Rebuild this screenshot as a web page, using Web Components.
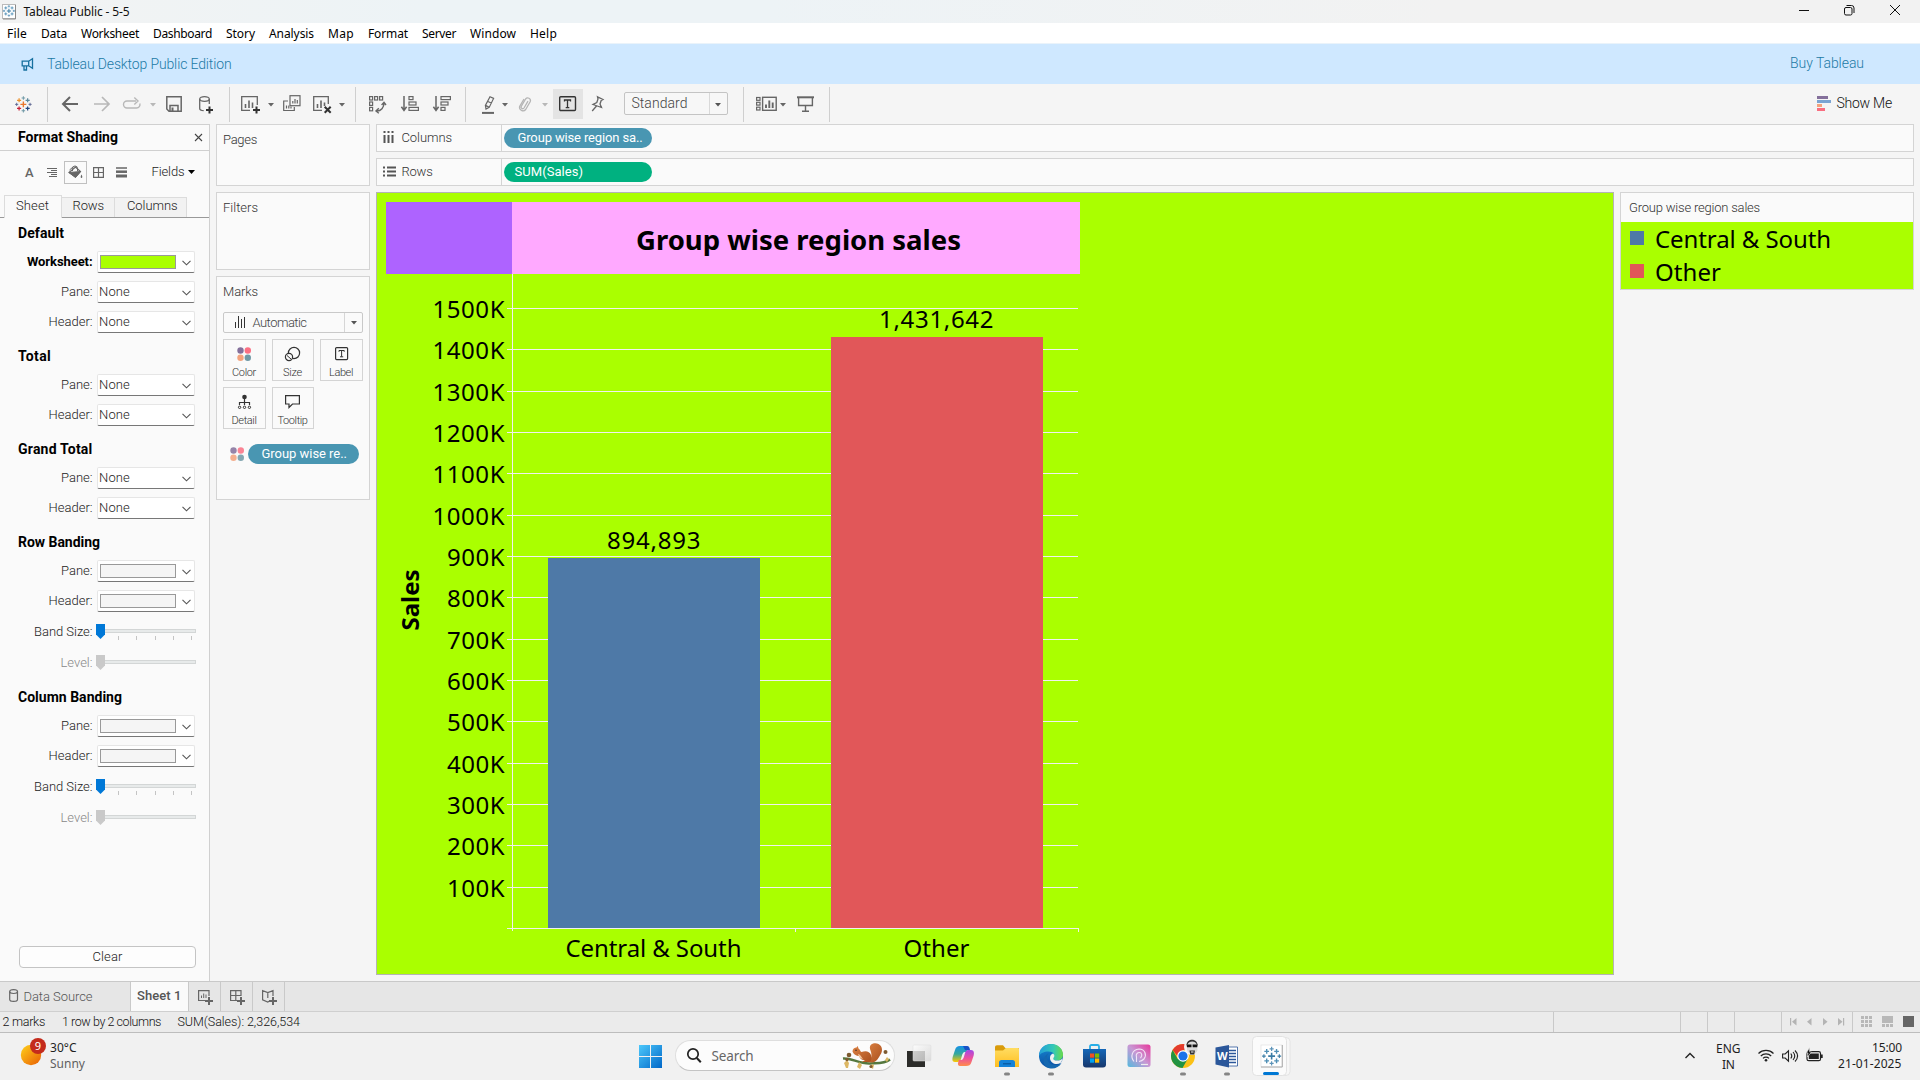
<!DOCTYPE html>
<html lang="en">
<head>
<meta charset="utf-8">
<title>Tableau Public - 5-5</title>
<style>
html,body{margin:0;padding:0;width:1920px;height:1080px;overflow:hidden;background:#f5f5f5}
body{font-family:Roboto,"Noto Sans",sans-serif;font-size:12.5px;color:#222;font-weight:300}
</style>
</head>
<body>
<workbook-app></workbook-app>
<script>
const BASE = `*{box-sizing:border-box} svg{display:block;flex:none;overflow:visible} .r{display:flex;align-items:flex-start} .i{flex:none}`;

function define(name, css, html, hook) {
  customElements.define(name, class extends HTMLElement {
    constructor() {
      super();
      this.attachShadow({ mode: 'open' });
    }
    connectedCallback() {
      if (this.ready) return;
      this.ready = true;
      const body = typeof html === 'function' ? html(this) : html;
      this.shadowRoot.innerHTML = `<style>${BASE}${css}</style>${body}`;
      if (hook) hook(this);
    }
  });
}

/* A single-line label tracked to an exact width. */
define('fit-text', ':host{display:block;white-space:pre;line-height:20px;height:20px} span{display:inline-block}', '<span><slot></slot></span>', el => {
  const s = el.shadowRoot.querySelector('span');
  const n = el.textContent.length;
  const w = parseFloat(el.getAttribute('w'));
  if (w) s.style.letterSpacing = ((w - s.getBoundingClientRect().width) / n) + 'px';
});

const T = (x, cy, x2, text, style = '') =>
  ({ x: x - 1, y: cy - 10, w: x2 - x + 2, h: 20, c: `<fit-text w="${x2 - x + 2}" style="${style}">${text}</fit-text>` });
const S = (x, y, w, h, inner, attrs = '') =>
  ({ x, y, w, h, c: `<svg width="${w}" height="${h}" viewBox="0 0 ${w} ${h}" fill="none" stroke="#666" ${attrs}>${inner}</svg>` });
const B = (x, y, w, h, style, inner = '') => ({ x, y, w, h, c: inner, s: style });
function row(items, ox = 0, oy = 0) {
  let cur = ox;
  return '<div class="r">' + items.map(i => {
    const m = i.x - cur;
    cur = i.x + i.w;
    return `<div class="i" style="margin-left:${m}px;margin-top:${i.y - oy}px;width:${i.w}px;height:${i.h}px;${i.s || ''}">${i.c}</div>`;
  }).join('') + '</div>';
}
const caret = (x, y, c = '#666') => S(x - 3, y - 1.5, 6, 4, `<path d="M0 0h6L3 3.6z" fill="${c}" stroke="none"/>`);

function sparkle(k, cols) {
  const plus = (x, y, r, c, w) => `<path d="M${x - r} ${y}h${2 * r}M${x} ${y - r}v${2 * r}" stroke="${c}" stroke-width="${w}"/>`;
  return `<g transform="scale(${k})">` +
    plus(9, 9, 3.2, cols[0], 1.5) + plus(9, 2.2, 1.9, cols[1], 1.1) + plus(9, 15.8, 1.9, cols[2], 1.1) +
    plus(1.8, 9, 1.7, cols[3], 1) + plus(16.2, 9, 1.7, cols[4], 1) +
    plus(4.4, 4.6, 2.2, cols[5], 1.3) + plus(13.6, 4.6, 2.2, cols[6], 1.3) +
    plus(4.4, 13.4, 2.2, cols[7], 1.3) + plus(13.6, 13.4, 2.2, cols[8], 1.3) + '</g>';
}
const BLUES = ['#3a7ca5', '#5b93b8', '#5b93b8', '#3a7ca5', '#3a7ca5', '#4e8fb5', '#4e8fb5', '#4e8fb5', '#4e8fb5'];
const BRAND = ['#e8762c', '#7099a6', '#7099a6', '#5b6591', '#5b6591', '#eb912c', '#59879b', '#c72037', '#1f447e'];

/* ---------- window chrome ---------- */
const seg = 'font-family:Noto Sans,sans-serif;font-weight:400;';
define('title-bar', ':host{display:block;height:23px;background:linear-gradient(90deg,#f2f3f3 0,#edf3f6 22%,#edf3f6 40%,#f2f2f2 75%)}',
  row([
    S(2, 4, 15, 15, `<rect x=".5" y=".5" width="13" height="14" fill="#fff" stroke="#bbb"/><path d="M13.5 1v14H1" stroke="#888"/><g transform="translate(.8,.8)">${sparkle(.68, BLUES)}</g>`),
    T(24.5, 11.5, 128.5, 'Tableau Public - 5-5', seg + 'font-size:12px;color:#111'),
    S(1799, 5, 10, 10, '<path d="M0 5.5h10" stroke="#111"/>'),
    S(1844, 5, 11, 11, '<rect x=".5" y="2.5" width="7.5" height="7.5" rx="1.5" stroke="#111"/><path d="M2.5.5h5a2.5 2.5 0 0 1 2.5 2.5v5" stroke="#111"/>'),
    S(1890, 5, 10, 10, '<path d="M0 0l10 10M10 0L0 10" stroke="#111"/>')
  ]));
const MENU = [['File', 8, 26], ['Data', 42, 66], ['Worksheet', 82, 138], ['Dashboard', 154, 211], ['Story', 227, 254], ['Analysis', 270, 313], ['Map', 329, 353], ['Format', 369, 407], ['Server', 423, 455], ['Window', 471, 515], ['Help', 531, 556]];
define('menu-bar', ':host{display:block;height:21px;background:#fff;border-bottom:1px solid #eaf3fa}',
  row(MENU.map(m => T(m[1], 33.5, m[2], m[0], seg + 'font-size:12px;color:#000')), 0, 23));
define('edition-banner', ':host{display:block;height:40px;background:#cfe8ff}',
  row([
    S(21, 58, 13, 13, '<path d="M1.2 3.2h6.5L11.5.8v9.4L7.7 7.8H1.2zM7.7 3.2v4.6M3 8v4h2.5V8" stroke="#17709f" stroke-width="1.3"/>'),
    T(48, 64, 230.5, 'Tableau Desktop Public Edition', 'font-size:14px;color:#217aa6'),
    T(1791, 63, 1863, 'Buy Tableau', 'font-size:14px;color:#217aa6')
  ], 0, 44));

/* ---------- toolbar ---------- */
const sep = x => B(x, 87, 1, 35, 'background:#cfcfcf');
const plusMark = (x, y) => `<path d="M${x - 3.5} ${y}h7M${x} ${y - 3.5}v7" stroke="#333" stroke-width="2"/>`;
define('tool-bar', ':host{display:block;height:40px;background:#f5f5f5} .sel{display:flex;height:23px;border:1px solid #c4c4c4;border-radius:2px;background:#f7f7f7}',
  row([
    S(15, 95.5, 17, 17, sparkle(.93, BRAND)),
    sep(47),
    S(62, 96, 16, 16, '<path d="M1 8h15M8 1L1 8l7 7" stroke-width="2"/>'),
    S(94, 96, 16, 16, '<path d="M0 8h15M8 1l7 7-7 7" stroke="#b8b8b8" stroke-width="1.7"/>'),
    S(123, 96, 18, 16, '<path d="M13 5H4a3.4 3.4 0 0 0 0 7h9.5a3.4 3.4 0 0 0 3.3-4.5M11.3 1.4L15 5l-3.7 3.6" stroke="#b8b8b8" stroke-width="1.4"/>'),
    caret(152.6, 104.5, '#b8b8b8'),
    S(166, 96, 16, 16, '<path d="M.8.8h14.4v14.4H3L.8 13zM4 15V9.5h8V15" stroke-width="1.5"/><path d="M5.5 11.5h2V15h-2z" fill="#666" stroke="none"/>'),
    S(199, 96, 15, 18, '<ellipse cx="5.5" cy="3" rx="4.8" ry="2.3" stroke-width="1.3"/><path d="M.7 3v9.5c0 1.2 2 2.1 4 2.2M10.3 3v5" stroke-width="1.3"/>' + plusMark(10.5, 14)),
    sep(229),
    S(241, 96, 20, 18, '<path d="M9 14.4H.7V.7h15.6V9" stroke-width="1.3"/><path d="M4.5 12V8M8 12V4.5M11.5 12V6.5" stroke-width="1.6"/>' + plusMark(15.5, 14)),
    caret(270.6, 104.5),
    S(283, 95, 18, 17, '<path d="M5 6H.7v9.5h10.6V12" stroke-width="1.2"/><rect x="7" y=".7" width="10" height="10" stroke-width="1.2"/><path d="M9.8 8.5V6M12 8.5V4M14.3 8.5V5M3.5 13.5v-3M5.8 13.5v-3M8 13.5v-2" stroke-width="1.2"/>'),
    S(313, 96, 19, 18, '<path d="M9 14.4H.7V.7h14.6V8" stroke-width="1.3"/><path d="M4.5 12V8M8 12V4.5M11.5 10V6.5" stroke-width="1.6"/><path d="M11.7 10.7l6 6M17.7 10.7l-6 6" stroke="#333" stroke-width="2"/>'),
    caret(342, 104.5),
    sep(355),
    S(369, 96, 17, 17, '<g stroke-width="1.2"><rect x=".6" y=".6" width="3" height="3.4"/><rect x="5.6" y=".6" width="3" height="3.4"/><rect x="10.6" y=".6" width="3" height="3.4"/><rect x=".6" y="6" width="3" height="3.4"/><rect x=".6" y="11.4" width="3" height="3.4"/><path d="M8 15c4 0 7-3.5 7-8M12.6 9L15 6.4 17 9M9.8 12.3L7 15l2.8 2.2" stroke-width="1.4"/></g>'),
    S(401, 96, 18, 16, '<path d="M3 0v14M.4 10.8L3 14.4l2.6-3.6" stroke-width="1.5"/><g stroke-width="1.2"><rect x="8" y=".6" width="4" height="3"/><rect x="8" y="6" width="7" height="3"/><rect x="8" y="11.4" width="9.4" height="3"/></g>'),
    S(433, 96, 18, 16, '<path d="M3 0v14M.4 10.8L3 14.4l2.6-3.6" stroke-width="1.5"/><g stroke-width="1.2"><rect x="8" y=".6" width="9.4" height="3"/><rect x="8" y="6" width="7" height="3"/><rect x="8" y="11.4" width="4" height="3"/></g>'),
    sep(465),
    S(482, 96, 13, 18, '<path d="M8 .8l3.6 1.6-4.4 9L4 13l-.6-3.6zM3.6 9.4l3.6 1.8M6 5.5l3.6 1.7" stroke-width="1.2"/><path d="M0 16.9h12" stroke-width="2"/>'),
    caret(505.5, 104.5),
    S(518, 96, 14, 16, '<path d="M10 5.2L6 12a1.6 1.6 0 0 1-2.8-1.5L7.6 3a2.7 2.7 0 0 1 4.7 2.5L7.7 13.5A3.5 3.5 0 0 1 1.6 10.5L6 3" stroke="#b5b5b5" stroke-width="1.3"/>'),
    caret(545.5, 104.5, '#b8b8b8'),
    B(553, 89, 30, 30, 'background:#e4e4e4;padding:7px 6px', '<svg width="18" height="16" fill="none" stroke="#333"><rect x=".7" y=".7" width="15.8" height="13.8" rx="1" stroke-width="1.4"/><path d="M5.5 5.5V4h6v1.5M8.5 4v7.6M6.7 11.6h3.6" stroke-width="1.3"/></svg>'),
    S(591, 96, 13, 16, '<path d="M6.5.8l5.5 2.7-1.8 1L9 8l1.5 3.5L2 8.5 5.8 6.500 7 3zM5.5 10L1.200 15" stroke-width="1.3"/>'),
    B(624, 92, 104, 23, '', `<div class="sel">${row([T(632.5, 103, 686.5, 'Standard', 'font-size:14px;color:#444'), B(709, 93, 1, 21, 'background:#d9d9d9'), caret(718.5, 104, '#555')], 625, 93)}</div>`),
    sep(743),
    S(756, 96, 21, 16, '<g stroke-width="1.2"><rect x=".6" y="1.5" width="3.4" height="2.8"/><rect x=".6" y="6.3" width="3.4" height="2.8"/><rect x=".6" y="11.2" width="3.4" height="2.8"/><rect x="6.6" y="1.3" width="13.6" height="13" stroke-width="1.4"/></g><path d="M10 12V8.5M13.3 12V4.5M16.7 12V6.5" stroke-width="1.9"/>'),
    caret(783.5, 104.5),
    S(797, 96, 17, 16, '<path d="M0 1.3h17" stroke-width="2"/><path d="M1.6 2v7.5h13.8V2M8.5 9.5v5.5M5 15.2h7" stroke-width="1.4"/>'),
    sep(829),
    S(1817, 96, 14, 15, '<g stroke="none"><path d="M0 0h11v3H0z" fill="#84709b"/><path d="M0 4h14v3H0z" fill="#7ba4d2"/><path d="M0 8h5v3H0z" fill="#f4a37d"/><path d="M0 12h8v3H0z" fill="#f96e80"/></g>'),
    T(1837.5, 103, 1891, 'Show Me', 'font-size:14px;color:#111')
  ], 0, 84));

/* ---------- format pane ---------- */
define('drop-down', `:host{display:flex;width:98px;height:22px;background:#fff;border:1px solid #e6e6e6;border-bottom:1px solid #777;border-radius:2px;align-items:center;justify-content:space-between;padding:0 2px;color:#222;font-size:13px}
 .sw{width:76px;height:14px;border:1px solid #999} fit-text{margin-left:-1px}`,
  el => {
    const c = el.getAttribute('swatch');
    return (c ? `<div class="sw" style="background:${c}"></div>` : '<fit-text w="31">None</fit-text>') +
      '<svg width="9" height="6" fill="none" stroke="#555" style="margin:1px 1px 0 0"><path d="M.5 .8l4 4 4-4" stroke-width="1.1"/></svg>';
  });
define('range-slider', ':host{display:block;width:100px;height:16px;margin-top:1px}',
  el => {
    const off = el.hasAttribute('disabled');
    const ticks = off ? '' : [22, 40, 59, 77, 95].map(x => `<path d="M${x + .5} 12v4" stroke="#c4c4c4"/>`).join('');
    return `<svg width="100" height="16" fill="none"><rect x="1.5" y="5.5" width="98" height="3" fill="#e7eaea" stroke="#d3d6d6"/><path d="M0 0h9v10.5L4.5 15 0 10.5z" fill="${off ? '#c9c9c9' : '#0078d7'}"/>${ticks}</svg>`;
  });
define('format-row', `:host{display:flex;height:30px;align-items:center;color:#222} :host([slider]){height:31px} :host([muted]){color:#888}
 .l{width:92.5px;display:flex;justify-content:flex-end;margin-right:3.5px} .l fit-text{font-size:13px} :host([strong]) .l{color:#000;font-weight:700}`,
  el => `<div class="l"><fit-text w="${el.getAttribute('w')}">${el.getAttribute('label')}</fit-text></div><slot></slot>`);
define('format-section', ':host{display:block} .h{height:33px;padding:9px 0 0 18px;color:#000;font-weight:700;font-size:14px}',
  el => `<div class="h"><fit-text w="${el.getAttribute('w')}">${el.getAttribute('label')}</fit-text></div><slot></slot>`);
const frow = (label, w, sw) => `<format-row label="${label}" w="${w}"${label === 'Worksheet:' ? ' strong' : ''}><drop-down${sw ? ` swatch="${sw}"` : ''} style="margin-left:1px"></drop-down></format-row>`;
const pane = sw => frow('Pane:', 31.5, sw) + frow('Header:', 44, sw);
const sliders = '<format-row slider label="Band Size:" w="58.5"><range-slider></range-slider></format-row><format-row slider muted label="Level:" w="32"><range-slider disabled></range-slider></format-row>';
define('format-pane', `:host{display:flex;flex-direction:column;width:210px;height:857px;background:#fafafa;border-top:1px solid #d0d0d0;border-right:1px solid #d0d0d0}
 .hd{height:26px;border-bottom:1px solid #d0d0d0;flex:none} .ic{height:44px;flex:none} .tabs{display:flex;height:23px;align-items:flex-end;border-bottom:1px solid #999;padding-left:4px;flex:none}
 .tabs div.tab{height:20px;background:#f2f2f2;border:1px solid #dcdcdc;border-left:0;border-bottom:0}
 .tabs div.on{height:23px;width:58px;background:#fafafa;border-left:1px solid #dcdcdc;margin-bottom:-1px}
 .body{flex:1;margin-top:-4px} .clear{margin:0 0 13px 19px;width:177px;height:22px;border:1px solid #c4c4c4;border-radius:4px;background:#fdfdfd;display:flex;justify-content:center;color:#222}
 .swatchbtn{width:23px;height:23px;border:1px solid #c0c0c0;padding:3px}`,
  `<div class="hd">${row([T(19, 137, 117, 'Format Shading', 'font-weight:700;font-size:14px;color:#000'), S(195, 133.5, 7, 7, '<path d="M0 0l7 7M7 0L0 7" stroke="#444" stroke-width="1.1"/>')], 0, 125)}</div>
   <div class="ic">${row([
    T(26, 172.5, 33, 'A', 'font-size:13px;color:#666;font-weight:500'),
    S(47, 168, 10, 9, '<path d="M0 .5h10M4 2.5h6M0 4.5h10M4 6.5h6M2 8.5h8" stroke-width="1"/>'),
    B(64, 161, 23, 23, '', '<div class="swatchbtn"><svg width="15" height="15" fill="none" stroke="#666"><path d="M1 7.5L7.5 2 12.5 6.5 7.5 12z" stroke-width="1.2"/><path d="M1 7.500l11.5-1L7.5 12.5z" fill="#666"/><path d="M4.5 6V3.5a2.5 2.5 0 0 1 5 0V6M1.5 5L5 2" stroke-width="1"/><path d="M13.500 9.5c1 1.6 1.2 3.5 0 3.5s-1-1.9 0-3.5z" fill="#666" stroke="none"/></svg></div>'),
    S(93, 167, 11, 11, '<path d="M.6.6h9.8v9.8H.6zM5.5.6v9.8M.6 5.5h9.8" stroke-width="1.2"/>'),
    S(116, 167, 11, 10, '<path d="M0 1h11" stroke-width="1.5"/><path d="M0 4.7h11" stroke-width="2.5"/><path d="M0 9h11" stroke-width="3"/>'),
    T(152.5, 172, 183.5, 'Fields', 'font-size:13px;color:#222'),
    S(188, 170, 7, 5, '<path d="M0 0h7L3.5 4z" fill="#000" stroke="none"/>')
  ], 0, 151)}</div>
   <div class="tabs"><div class="tab on">${row([T(17, 206, 48, 'Sheet', 'font-size:13px')], 5, 196)}</div><div class="tab" style="width:53px">${row([T(73.5, 207, 103, 'Rows', 'font-size:13px')], 62, 199)}</div><div class="tab" style="width:72px">${row([T(128, 207, 176.5, 'Columns', 'font-size:13px')], 115, 199)}</div></div>
   <div class="body">
    <format-section label="Default" w="46">${frow('Worksheet:', 65.5, '#aaff00')}${pane()}</format-section>
    <format-section label="Total" w="33">${pane()}</format-section>
    <format-section label="Grand Total" w="74.5">${pane()}</format-section>
    <format-section label="Row Banding" w="82">${pane('#f5f5f5')}${sliders}</format-section>
    <format-section label="Column Banding" w="104">${pane('#f5f5f5')}${sliders}</format-section>
   </div>
   <div class="clear"><fit-text w="30" style="font-size:13px">Clear</fit-text></div>`);

/* ---------- cards ---------- */
const dots = '<g stroke="none"><circle cx="3.5" cy="3.5" r="3.2" fill="#84709b"/><circle cx="10.8" cy="3.5" r="3.2" fill="#fb7083"/><circle cx="3.5" cy="10.8" r="3.2" fill="#f4a37d"/><circle cx="10.8" cy="10.8" r="3.2" fill="#7099a6"/></g>';
define('side-card', ':host{display:block;width:154px;background:#fafafa;border:1px solid #d4d4d4;flex:none}',
  el => row([T(224, 16, +el.getAttribute('end'), el.getAttribute('label'), 'font-size:13px;color:#333')], 217, 1) + '<slot></slot>');
define('mark-button', ':host{display:flex;flex-direction:column;align-items:center;width:43px;height:42px;border:1px solid #d4d4d4;background:#fafafa;padding-top:7px;padding-right:1px;color:#333;font-size:11px} .ic{height:17px} fit-text{height:16px;line-height:16px;margin-top:2px}',
  el => `<div class="ic"><slot></slot></div><fit-text w="${el.getAttribute('w')}">${el.getAttribute('label')}</fit-text>`);
const mi = (w, p) => `<svg width="${w}" height="16" style="overflow:visible;display:block" fill="none" stroke="#333">${p}</svg>`;
define('marks-body', ':host{display:block} .dd{margin:10px 0 0 6px;width:140px;height:21px;border:1px solid #c9c9c9;border-radius:2px} .g{display:grid;grid-template-columns:43px 42px 43px;gap:6px;margin:6px 0 0 6px} .g mark-button{width:auto} .p{margin-top:15px}',
  `<div class="dd">${row([
    S(235, 316, 11, 12, '<path d="M.5 12V6M3.5 12V0M6.5 12V3M9.5 12V1" stroke="#333"/>'),
    T(253.5, 323, 305.5, 'Automatic', 'font-size:13px;color:#444'),
    B(344, 313, 1, 19, 'background:#d6d6d6'), caret(353.5, 322.5, '#555')], 224, 313)}</div>
   <div class="g">
    <mark-button label="Color" w="24">${mi(14, dots)}</mark-button>
    <mark-button label="Size" w="19">${mi(15, '<circle cx="9" cy="6" r="5.6" stroke-width="1.2"/><circle cx="4" cy="10" r="3.6" fill="#fafafa" stroke-width="1.2"/><path d="M2 8.5l4 3.5" />')}</mark-button>
    <mark-button label="Label" w="24">${mi(13, '<rect x=".6" y=".6" width="12" height="12" rx="1" stroke-width="1.2"/><path d="M4 4.8V3.5h5.2v1.3M6.6 3.5v6.2M5 9.8h3.2"/>')}</mark-button>
    <mark-button label="Detail" w="25">${mi(13, '<circle cx="6.5" cy="2" r="2.3" fill="#333" stroke="none"/><path d="M6.5 4v6M1.5 10V7.5h10V10" stroke-width="1.2"/><circle cx="1.6" cy="12.3" r="1.2"/><circle cx="6.5" cy="12.3" r="1.2"/><circle cx="11.4" cy="12.3" r="1.2"/>')}</mark-button>
    <mark-button label="Tooltip" w="30">${mi(15, '<path d="M.6.6h13.8v8.4H7.5L4 12.5V9H.6z" stroke-width="1.2"/>')}</mark-button>
   </div>
   <div class="p">${row([S(230, 447, 14, 14, dots, 'opacity=".85"'), B(248, 444, 111, 20, 'background:#4996b2;border-radius:10px', row([T(262.5, 454, 346, 'Group wise re..', 'font-size:13px;color:#fff;font-weight:400')], 248, 444))], 217, 444)}</div>`);

/* ---------- shelves ---------- */
define('shelf-row', ':host{display:flex;width:1538px;height:28px;background:#fafafa;border:1px solid #d4d4d4}',
  el => {
    const col = el.hasAttribute('columns');
    const icon = col ? S(383, 131, 12, 13, '<path d="M1.5 0v2M1.5 4v8M5.5 0v2M5.5 4v8M9.5 0v2M9.5 4v8" stroke="#555" stroke-width="2"/>')
      : S(383, 132, 13, 11, '<path d="M0 1.5h2M4 1.5h9M0 5.5h2M4 5.5h9M0 9.5h2M4 9.5h9" stroke="#555" stroke-width="2"/>');
    return row([icon, T(402.5, 138, col ? 451 : 431.5, col ? 'Columns' : 'Rows', 'font-size:13px;color:#333'),
      B(501, 125, 1, 26, 'background:#d4d4d4'),
      B(504, 128, 148, 20, `border-radius:10px;background:${col ? '#4996b2' : '#00b180'}`,
        row([col ? T(518.5, 138, 641.5, 'Group wise region sa..', 'font-size:13px;color:#fff;font-weight:400') : T(515.5, 138, 582, 'SUM(Sales)', 'font-size:13px;color:#fff;font-weight:400')], 504, 128))], 377, 125);
  });

/* ---------- chart ---------- */
define('bar-chart', ':host{display:block;width:1238px;height:783px;border:1px solid #b4b4b4;background:#aaff00} text{font-family:"Noto Sans",sans-serif;font-size:24px;font-weight:400;fill:#000;stroke:none}',
  () => {
    let g = '';
    for (let i = 1; i <= 15; i++) {
      const y = Math.floor(928.2 - i * 41.333 + .15);
      const s = i + '00K', w = i > 9 ? 72 : 57.5;
      g += `<path d="M507 ${y + .5}H1078" stroke="#f0f0f0"/><text x="${504.5 - w}" y="${y + 10}" textLength="${w}">${s}</text>`;
    }
    const t = (x, x2, y, s, a = '') => `<text x="${x - 1}" y="${y}" textLength="${x2 - x + 2}" ${a}>${s}</text>`;
    return `<svg width="1236" height="781" viewBox="377 193 1236 781" fill="none">
     <path d="M386 202h126v72H386z" fill="#ae63ff"/><path d="M512 202h568v72H512z" fill="#ffa9ff"/>
     ${g}
     <path d="M512.5 274v657M507 928.5H1079M795.5 928v4M1078.5 928v4" stroke="#f0f0f0"/>
     <path d="M548 558h212v370H548z" fill="#4e79a7"/><path d="M831 337h212v591H831z" fill="#e15759"/>
     ${t(637, 960, 249.5, 'Group wise region sales', 'style="font-size:27.5px;font-weight:700"')}
     ${t(608, 699.5, 549, '894,893')}${t(880, 992.5, 328, '1,431,642')}
     ${t(566.5, 740.5, 957, 'Central &amp; South')}${t(904.5, 968.5, 957, 'Other')}
     <text transform="translate(419,630.5) rotate(-90)" textLength="61" style="font-weight:700">Sales</text></svg>`;
  });
define('color-legend', ':host{display:block;width:294px;height:98px;border:1px solid #d4d4d4;background:#fafafa} .b{background:#aaff00;height:67px} .h{height:29px}',
  () => {
    const f = 'font-family:Noto Sans,sans-serif;font-weight:400;font-size:24px;color:#000;';
    return `<div class="h">${row([T(1630, 208, 1759, 'Group wise region sales', 'font-size:13px;color:#333')], 1621, 193)}</div>
    <div class="b">${row([B(1630, 231, 14, 14, 'background:#4e79a7'), T(1656, 239, 1830, 'Central &amp; South', f)], 1621, 222)}
    ${row([B(1630, 22, 14, 14, 'background:#e15759'), T(1656, 30, 1720, 'Other', f)], 1621, 7)}</div>`;
  });

/* ---------- bottom bars ---------- */
define('sheet-tabs', ':host{display:block;height:30px;background:#e6e6e6;border-top:1px solid #c9c9c9}',
  row([
    S(9, 989, 10, 13, '<ellipse cx="4.6" cy="2.6" rx="3.9" ry="1.9"/><path d="M.7 2.6v7.8c0 1.1 1.7 1.9 3.9 1.9s3.9-.8 3.9-1.9V2.6"/>', 'stroke-width="1.2"'),
    T(24.5, 996.5, 91.5, 'Data Source', 'font-size:13px;color:#555'),
    B(130, 982, 59, 29, 'background:#fafafa;border-left:1px solid #c9c9c9;border-right:1px solid #c9c9c9', row([T(138, 996, 180.5, 'Sheet 1', 'font-size:13px;font-weight:500;color:#555')], 131, 982)),
    S(198, 990, 15, 15, '<path d="M8 10.5H.6V.6H11V6" stroke-width="1.2"/><path d="M3.5 8V5.5M5.7 8V3.5M8 8V4.5"/><path d="M7 11h8M11 7v8" stroke-width="2"/>'),
    B(220, 982, 1, 29, 'background:#c9c9c9'),
    S(230, 990, 15, 15, '<path d="M8 10.5H.6V.6H11V6M5.8.6v10M.6 5.5H11" stroke-width="1.2"/><path d="M7 11h8M11 7v8" stroke-width="2"/>'),
    B(252, 982, 1, 29, 'background:#c9c9c9'),
    S(262, 990, 15, 15, '<path d="M8 10.8L5.8 12 .6 9.8V.6L5.8 2.5 11 .6V6M5.8 2.5V8" stroke-width="1.2"/><path d="M7 11h8M11 7v8" stroke-width="2"/>'),
    B(284, 982, 1, 29, 'background:#c9c9c9')
  ], 0, 982));
const vs = x => B(x, 1012, 1, 20, 'background:#c9c9c9');
define('status-bar', ':host{display:block;height:22px;background:#ebebeb;border-top:1px solid #cfcfcf;border-bottom:1px solid #bdbdbd;font-size:12.5px;color:#111}',
  row([
    T(3.5, 1022, 44, '2 marks'), T(63, 1022, 160, '1 row by 2 columns'), T(178.5, 1022, 299, 'SUM(Sales): 2,326,534'),
    vs(1553), vs(1680), vs(1707), vs(1734), vs(1781),
    S(1790, 1018, 7, 8, '<path d="M.6 0v7.5" stroke="#b4b4b4" stroke-width="1.2"/><path d="M6.5 0v7.5L2 3.8z" fill="#b4b4b4" stroke="none"/>'),
    S(1807, 1018, 5, 8, '<path d="M4.5 0v7.5L0 3.8z" fill="#b4b4b4" stroke="none"/>'),
    S(1823, 1018, 5, 8, '<path d="M0 0v7.5L4.5 3.8z" fill="#b4b4b4" stroke="none"/>'),
    S(1838, 1018, 7, 8, '<path d="M5.6 0v7.5" stroke="#b4b4b4" stroke-width="1.2"/><path d="M0 0v7.5L4.5 3.8z" fill="#b4b4b4" stroke="none"/>'),
    vs(1852),
    S(1861, 1016, 11, 11, '<path d="M0 1.5h11M0 5.5h11M0 9.5h11" stroke="#b8b8b8" stroke-width="3" stroke-dasharray="3 1"/>'),
    S(1882, 1016, 11, 11, '<path d="M0 3.5h11" stroke="#b8b8b8" stroke-width="7"/><path d="M0 9.5h11" stroke="#b8b8b8" stroke-width="3" stroke-dasharray="3 1"/>'),
    B(1903, 1016, 11, 11, 'background:#666')
  ], 0, 1012));

define('task-bar', ':host{display:block;height:47px;background:#f1f1f1} .pill{height:31px;border-radius:16px;background:#fcfcfc;border:1px solid #dedede;border-bottom-color:#c4c4c4}',
  () => {
    const f = seg + 'font-size:12px;color:#1f1f1f';
    const dot = '<rect x="9" y="28.5" width="6" height="3" rx="1.5" fill="#858585"/>';
    const A = (x, p) => S(x, 1044, 24, 34, p, 'stroke-width="0"');
    return `<svg width="0" height="0" style="position:absolute"><defs>
      <linearGradient id="sun" x1="0" y1="0" x2="1" y2="1"><stop offset="0" stop-color="#ffd21c"/><stop offset="1" stop-color="#e85d04"/></linearGradient>
      <linearGradient id="win" x1="0" y1="0" x2="1" y2="1"><stop offset="0" stop-color="#4cc8fb"/><stop offset="1" stop-color="#0067c8"/></linearGradient>
      <linearGradient id="cpa" x1="0" y1="0" x2="0" y2="1"><stop offset="0" stop-color="#1590e8"/><stop offset=".5" stop-color="#35a99b"/><stop offset="1" stop-color="#ffc700"/></linearGradient>
      <linearGradient id="cpb" x1="0" y1="0" x2="0" y2="1"><stop offset="0" stop-color="#a348e8"/><stop offset=".5" stop-color="#ec4fa0"/><stop offset="1" stop-color="#ff8c4a"/></linearGradient>
      <linearGradient id="fol" x1="0" y1="0" x2="0" y2="1"><stop offset="0" stop-color="#ffdd62"/><stop offset="1" stop-color="#ffbe20"/></linearGradient>
      <linearGradient id="ed1" x1="0" y1="0" x2="1" y2="0"><stop offset="0" stop-color="#239edb"/><stop offset=".6" stop-color="#35c9b5"/><stop offset="1" stop-color="#6bdb48"/></linearGradient>
      <linearGradient id="ed2" x1="0" y1="0" x2="0" y2="1"><stop offset="0" stop-color="#168bd5"/><stop offset="1" stop-color="#0b4ea2"/></linearGradient>
      <linearGradient id="sto" x1="0" y1="0" x2="0" y2="1"><stop offset="0" stop-color="#1467b8"/><stop offset="1" stop-color="#17376c"/></linearGradient>
      <linearGradient id="pk" x1="1" y1="0" x2="0" y2="1"><stop offset="0" stop-color="#e7389c"/><stop offset=".5" stop-color="#c898d4"/><stop offset="1" stop-color="#54b9dd"/></linearGradient>
      <linearGradient id="tv" x1="0" y1="0" x2="1" y2="1"><stop offset="0" stop-color="#fff"/><stop offset="1" stop-color="#d4d4d4"/></linearGradient>
      <linearGradient id="sq" x1="0" y1="0" x2="1" y2="1"><stop offset="0" stop-color="#dd8243"/><stop offset="1" stop-color="#a9501f"/></linearGradient></defs></svg>` +
    row([
      S(21, 1037, 26, 29, '<circle cx="10" cy="18" r="10.2" fill="url(#sun)" stroke="none"/><circle cx="17" cy="9" r="8" fill="#c42b1c" stroke="none"/><text x="17" y="13" text-anchor="middle" stroke="none" fill="#fff" style="font:11px Noto Sans">9</text>'),
      { x: 50, y: 1038, w: 36, h: 40, c: `<fit-text w="26.5" style="${f}">30°C</fit-text><fit-text w="35" style="${seg}font-size:12px;color:#5f5f5f;margin-top:-4px">Sunny</fit-text>` },
      S(639, 1045, 23, 23, '<path d="M0 0h11v11H0zM12 0h11v11H12zM0 12h11v11H0zM12 12h11v11H12z" fill="url(#win)" stroke="none"/>'),
      { x: 675, y: 1040, w: 220, h: 32, c: `<div class="pill">${row([
        S(687, 1048, 15, 16, '<circle cx="6" cy="6" r="5.2" stroke="#222" stroke-width="1.7"/><path d="M9.8 10l4 4.2" stroke="#222" stroke-width="2"/>'),
        T(712.5, 1055.5, 752.5, 'Search', seg + 'font-size:13.5px;color:#666'),
        S(842, 1042, 51, 28, '<path d="M1 16.5c8-1 16 5.500 27 5 8-.5 14 .5 20-4" stroke="#55783f" stroke-width="2.5"/><path d="M24 20c7-2 6-8 4-13C27 1.500 33 .5 36.500 2c4 2 4.500 7 2 10.500-2 3-3 7-8 8z" fill="url(#sq)" stroke="none"/><path d="M10.500 9.500c0-2.500 2-4 4-4l1.200-1.500.8 2.500c2 1 1.500 3 3 3.500 4-1.500 8-1 9.500 3 1 3 .5 7-2.500 7h-6.500l3-2c-3 .500-5-1.500-6-4-2 0-5-1-6.500-4.500z" fill="url(#sq)" stroke="none"/><path d="M16 12c2 0 3.500 3 5 5-2.500-.500-4.500-2-5-5z" fill="#f3c9a2" stroke="none"/><g fill="#dcb764" stroke="none"><path d="M5 18l2 3-1 5H4l-2-5zM17 20l3 3-2 4-3-2zM30 22l2 1-1 4-3-2zM45 15l2 2-2 3-2-2z"/></g><g fill="#7d5a30" stroke="none"><circle cx="7" cy="13" r="2.3"/><circle cx="5" cy="17.500" r="1.7"/><circle cx="43.500" cy="10" r="2"/><circle cx="29" cy="24.500" r="1.600"/></g><circle cx="14" cy="8.300" r=".7" fill="#222" stroke="none"/>')
      ], 676, 1041)}</div>` },
      S(907, 1044, 25, 24, '<path d="M0 7h18v16H0z" fill="#2c2c2a" stroke="none"/><rect x="6" y="1" width="18" height="16" rx="1" fill="url(#tv)" fill-opacity=".8" stroke="#ddd" stroke-width=".5"/>'),
      S(952, 1046, 22, 20, '<path d="M8 0h6c2 0 2.5 2 1.7 4l-.7 2H13c-2 0-2.5 2-3 3.5L9 13c-.7 2-1.5 3-3.5 3H3c-3 0-3-3-2-6L3 4C4 1 5 0 8 0z" fill="url(#cpa)" stroke="none"/><path d="M11 0h4c2 0 2.5 1.5 3 4h-5z" fill="#1752c7" stroke="none"/><path d="M14 20H8c-2 0-2.5-2-1.7-4l.7-2H9c2 0 2.5-2 3-3.5L13 7c.7-2 1.5-3 3.5-3H19c3 0 3.5 3 2.5 6L19.5 16c-1 3-2.5 4-5.5 4z" fill="url(#cpb)" stroke="none"/>'),
      A(995, `<path d="M0 3.5C0 2 .8 1.2 2 1.2h6l2.5 3H24v6H0z" fill="#d99b0b"/><path d="M0 6.5h8L11 4h11.5c1 0 1.5.6 1.5 1.5V23H0z" fill="url(#fol)"/><path d="M4 23v-4.500C4 17 5 16 6.5 16h11c1.500 0 2.5 1 2.5 2.5V23z" fill="#1683d8"/><path d="M8 19h8v1.5H8z" fill="#0b5fa8"/>${dot}`),
      A(1039, `<circle cx="12" cy="12" r="12" fill="url(#ed2)"/><path d="M.2 10C1 4 6 0 12 0c7 0 12 5 12 10.5 0 4-3 6-6 6-4 0-5-1.5-3.5-3 2-3-.5-6-5-6C5 7.5 1.5 9 .2 12z" fill="url(#ed1)"/><path d="M10 9c-3 2-3 8 2 11 4 2 8 1 10.5-1-3 5.5-10 7-15 4C2 19 5 11 10 9z" fill="#1467b0"/><path d="M14 9.5c1.8 1 1.7 3 .5 4.5-1 1.5 1 2.6 4 2.6 2 0 3.8-.8 5-2.1-.5 2-1 3.5-2 4.5-4 2.5-10 .5-10.5-4.5C10.8 12 12 10 14 9.5z" fill="#f1f1f1"/>${dot}`),
      A(1083, '<path d="M7 5V2.5C7 1.500 7.5 1 8.5 1h6c1 0 1.5.5 1.5 1.5V5" style="stroke:#29aee6;stroke-width:1.8;fill:none"/><path d="M0 5h23v15.5c0 2-1 3-3 3H3c-2 0-3-1-3-3z" fill="url(#sto)"/><path d="M7 9.5h4.200v4.200H7z" fill="#f25022"/><path d="M12 9.5h4.200v4.200H12z" fill="#7fba00"/><path d="M7 14.5h4.200v4.200H7z" fill="#00a4ef"/><path d="M12 14.5h4.200v4.200H12z" fill="#ffb900"/>'),
      A(1127, '<rect x=".5" y=".5" width="23" height="22.5" rx="2.5" fill="url(#pk)"/><path d="M7 17.5c-4-5-2-12 5-12.5 6 0 8 6 5 10-1 1-2 2-5 2.500M9.5 18v-5c-1-3 1-4.500 3-4.500s3.500 3 1 5.500" fill="none" stroke="#f3e6f8" stroke-width="1.1"/><path d="M14 20.5h7" stroke="#eee" stroke-width="1.2"/>'),
      S(1171, 1038, 30, 40, `<g stroke="none"><circle cx="12" cy="18" r="12" fill="#fbc116"/><path d="M1.6 12A12 12 0 0 1 22.4 12H12L8 20z" fill="#e33b2e"/><path d="M1.6 12A12 12 0 0 0 11.5 30l5.3-9.2L6.8 21z" fill="#229342"/><circle cx="12" cy="18" r="5.8" fill="#fff"/><circle cx="12" cy="18" r="4.6" fill="#1a73e8"/><circle cx="21" cy="9" r="8" fill="#f2f2f2"/><path d="M16 6c0-5 9.500-5 10 0l.5 6c-1 5.500-9 5.500-10.500 0z" fill="#d9d9d9"/><path d="M15.500 7c.5-7 10.500-7 11.200 0l-1-.5c-1-4-8-4-9.200 0z" fill="#333"/><path d="M15.500 6.500h5v2.800h-4.500zM21.500 6.500h5.200l-.5 2.800h-4.500z" fill="#111"/><path d="M18.500 12.500h5.500l-.8 4h-4z" fill="#333"/><path d="M20 13.500h2.500v1H20z" fill="#eee"/><rect x="9" y="34.5" width="6" height="3" rx="1.5" fill="#858585"/></g>`),
      A(1215, `<path d="M12 3h10.5v19H12z" fill="#fff" style="stroke:#2b579a;stroke-width:.8"/><path d="M14 6.5h7M14 9.5h7M14 12.500h7M14 15.5h7M14 18.5h7" style="stroke:#2b579a;stroke-width:1.3"/><path d="M.5 3.5L14 1v22.500L.5 20.500z" fill="#2b579a"/><text x="7.3" y="16.2" text-anchor="middle" fill="#fff" style="font:bold 11px Noto Sans">W</text>${dot}`),
      S(1252, 1036, 39, 41, `<rect x="6" y="1.5" width="32" height="38" rx="4" fill="#f7f7f7" stroke="#e4e4e4"/><rect x=".5" y=".5" width="34" height="39" rx="4" fill="#fbfbfb" stroke="#e2e2e2"/><rect x="9" y="9" width="21" height="22" fill="#fff" stroke="#ddd" stroke-width=".6"/><path d="M30.3 9v22H9" stroke="#aaa"/><g transform="translate(10,10.5)">${sparkle(1.07, BLUES)}</g><rect x="11" y="36" width="16" height="3" rx="1.5" fill="#0078d4" stroke="none"/>`),
      S(1685, 1052, 10, 7, '<path d="M.5 6L5 1.5 9.5 6" stroke="#222" stroke-width="1.4"/>'),
      { x: 1716, y: 1038.5, w: 25, h: 40, c: `<fit-text w="24.5" style="${f}">ENG</fit-text><fit-text w="12.5" style="${f};margin:-4px 0 0 6px">IN</fit-text>` },
      S(1758, 1049, 16, 13, '<path d="M.5 4.5a10.5 10.5 0 0 1 15 0M2.800 7a7.300 7.300 0 0 1 10.400 0M5 9.3a4.200 4.200 0 0 1 6 0" stroke="#222" stroke-width="1.2"/><circle cx="8" cy="11.3" r="1.3" fill="#222" stroke="none"/>'),
      S(1782, 1050, 16, 12, '<path d="M.6 4h2.600L6.5.8v10.4L3.2 8H.6zM8.8 3.5c1.2 1.5 1.2 3.500 0 5M11 2c2.200 2.500 2.200 5.500 0 8M13 .5c3.300 3.500 3.300 7.500 0 11" stroke="#222" stroke-width="1.1"/>'),
      S(1806, 1048, 17, 14, '<rect x="1" y="3.7" width="13.5" height="9" rx="1.8" stroke="#222" stroke-width="1.2"/><path d="M2.8 5.500h10v5.400h-10zM14.8 6.500h1.900v3.500h-1.900z" fill="#222" stroke="none"/><path d="M3.500-.5L.5 5H2l-.5 4L5.500 4H3.7z" fill="#111" stroke="#f1f1f1" stroke-width=".6"/>'),
      { x: 1838, y: 1038, w: 64, h: 40, c: `<fit-text w="30" style="${f};margin-left:34px">15:00</fit-text><fit-text w="63.5" style="${f};margin-top:-4px">21-01-2025</fit-text>` }
    ], 0, 1033);
  });

define('workbook-app', `:host{display:flex;flex-direction:column;width:1920px;height:1080px;background:#f5f5f5}
 .work{display:flex;height:857px} .cards{display:flex;flex-direction:column;gap:6px;margin-left:6px} .main{display:flex;flex-direction:column;gap:6px;margin-left:6px} .view{display:flex;gap:6px}`,
  `<title-bar></title-bar><menu-bar></menu-bar><edition-banner></edition-banner><tool-bar></tool-bar>
   <div class="work"><format-pane></format-pane>
    <div class="cards"><side-card label="Pages" end="256" style="height:62px"></side-card><side-card label="Filters" end="257" style="height:78px"></side-card><side-card label="Marks" end="257" style="height:224px"><marks-body></marks-body></side-card></div>
    <div class="main"><shelf-row columns></shelf-row><shelf-row></shelf-row><div class="view"><bar-chart></bar-chart><color-legend></color-legend></div></div>
   </div>
   <sheet-tabs></sheet-tabs><status-bar></status-bar><task-bar></task-bar>`);
</script>
</body>
</html>
